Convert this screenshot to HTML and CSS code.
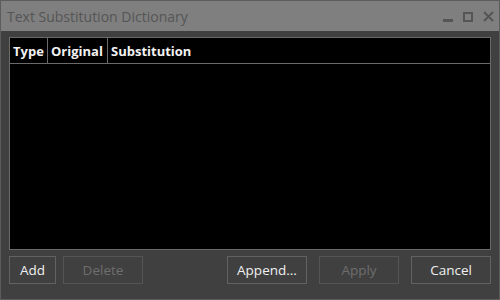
FILE: index.html
```html
<!DOCTYPE html>
<html lang="en">

<head>
  <meta charset="UTF-8">
  <title>Text Substitution Dictionary</title>
  <link rel="stylesheet" href="styles.css">
</head>

<body>
  <div class="window">
    <div class="titlebar">
      <span class="title">Text Substitution Dictionary</span>
      <div class="controls">
        <span class="ctl-min"></span>
        <span class="ctl-max"></span>
        <svg class="ctl-close" width="11" height="11" viewBox="0 0 11 11">
          <path d="M1 1 L10 10 M10 1 L1 10" stroke="#555" stroke-width="2" />
        </svg>
      </div>
    </div>

    <div class="content">
      <div class="grid">
        <div class="grid-head">
          <div class="col col-type">Type</div>
          <div class="col col-orig">Original</div>
          <div class="col col-sub">Substitution</div>
        </div>
      </div>

      <div class="buttons">
        <div class="btn-group">
          <button class="btn btn-small">Add</button>
          <button class="btn" disabled>Delete</button>
        </div>
        <div class="btn-group right">
          <button class="btn">Append...</button>
          <button class="btn" disabled>Apply</button>
          <button class="btn">Cancel</button>
        </div>
      </div>
    </div>
  </div>
</body>

</html>
```

FILE: styles.css
```css
* {
  margin: 0;
  padding: 0;
  box-sizing: border-box;
}

body {
  font-family: 'Open Sans', 'Noto Sans', sans-serif;
  background: #404040;
  width: 500px;
  height: 300px;
  overflow: hidden;
}

.window {
  width: 500px;
  height: 300px;
  border: 1px solid #5c5c5c;
  display: flex;
  flex-direction: column;
  background: #404040;
}

.titlebar {
  height: 30px;
  background: #7f7f7f;
  display: flex;
  align-items: center;
  justify-content: space-between;
  padding: 1px 5px 0 6px;
}

.title {
  color: #555;
  font-size: 14px;
}

.controls {
  display: flex;
  align-items: center;
  gap: 10px;
}

.ctl-min {
  width: 10px;
  height: 3px;
  background: #555;
  margin-top: 8px;
}

.ctl-max {
  width: 10px;
  height: 10px;
  border: 2px solid #555;
}

.ctl-close {
  display: block;
}

.content {
  flex: 1;
  padding: 6px 8px 14px 8px;
  display: flex;
  flex-direction: column;
}

.grid {
  height: 213px;
  background: #000;
  border: 1px solid #6a6a6a;
}

.grid-head {
  display: flex;
  height: 26px;
  border-bottom: 1px solid #6a6a6a;
}

.col {
  color: #f2f2f2;
  font-weight: bold;
  font-size: 13px;
  padding: 4px 3px 0 3px;
  border-right: 1px solid #6a6a6a;
}

.col-type {
  width: 38px;
}

.col-orig {
  width: 60px;
}

.col-sub {
  border-right: none;
}

.buttons {
  display: flex;
  justify-content: space-between;
  margin-top: 6px;
}

.btn-group {
  display: flex;
  gap: 7px;
}

.btn-group.right {
  gap: 12px;
}

.btn {
  width: 80px;
  height: 28px;
  background: #404040;
  border: 1px solid #626262;
  color: #f0f0f0;
  font-family: 'Open Sans', 'Noto Sans', sans-serif;
  font-size: 13.5px;
}

.btn-small {
  width: 47px;
}

.btn:disabled {
  color: #6e6e6e;
  border-color: #555;
}
```
